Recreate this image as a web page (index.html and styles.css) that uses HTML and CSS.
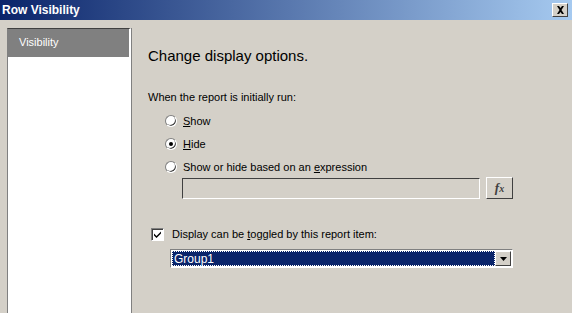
FILE: index.html
```html
<!DOCTYPE html>
<html lang="en">
<head>
    <meta charset="UTF-8">
    <title>Row Visibility</title>
    <link rel="stylesheet" href="styles.css">
</head>
<body>
    <div class="window">
        <div class="titlebar">
            <span class="title">Row Visibility</span>
            <span class="close-btn">
                <svg width="9" height="8" viewBox="0 0 9 8"><path d="M1 0h2l1.5 2L6 0h2L5.5 4 8 8H6L4.5 6 3 8H1l2.5-4z" fill="#000"/></svg>
            </span>
        </div>
        <div class="content">
            <div class="sidebar">
                <div class="side-item">Visibility</div>
            </div>
            <div class="main">
                <h1>Change display options.</h1>
                <p class="caption">When the report is initially run:</p>
                <div class="radio-row"><span class="radio"></span><span><u>S</u>how</span></div>
                <div class="radio-row"><span class="radio checked"></span><span><u>H</u>ide</span></div>
                <div class="radio-row"><span class="radio"></span><span>Show or hide based on an <u>e</u>xpression</span></div>
                <div class="expr-group">
                    <div class="expr-input"></div>
                    <div class="fx-btn"><i>f</i><sub>x</sub></div>
                </div>
                <div class="check-row">
                    <span class="checkbox">
                        <svg width="9" height="9" viewBox="0 0 9 9"><path d="M1 3.5l2.5 2.5L8 1.5v2L3.5 8 1 5.5z" fill="#000"/></svg>
                    </span>
                    <span>Display can be <u>t</u>oggled by this report item:</span>
                </div>
                <div class="select">
                    <div class="select-value"><span>Group1</span></div>
                    <div class="select-btn">
                        <svg width="7" height="4" viewBox="0 0 7 4"><path d="M0 0h7L3.5 4z" fill="#000"/></svg>
                    </div>
                </div>
            </div>
        </div>
    </div>
</body>
</html>
```
FILE: styles.css
```css
body {
    margin: 0;
    font-family: 'Liberation Sans', Arial, sans-serif;
    font-size: 11px;
    color: #000;
    background: #d4d0c8;
}

.window {
    width: 572px;
    height: 313px;
    display: flex;
    flex-direction: column;
    overflow: hidden;
}

.titlebar {
    height: 20px;
    flex: none;
    display: flex;
    align-items: center;
    justify-content: space-between;
    padding: 0 4px 0 2px;
    background: linear-gradient(to right, #0a246a, #a6caf0);
}

.title {
    color: #fff;
    font-weight: bold;
    font-size: 12px;
}

.close-btn {
    width: 16px;
    height: 14px;
    display: flex;
    align-items: center;
    justify-content: center;
    background: #d4d0c8;
    border: 1px solid;
    border-color: #fff #404040 #404040 #fff;
    box-sizing: border-box;
}

.content {
    flex: 1;
    display: flex;
    padding: 8px 0 0 7px;
}

.sidebar {
    width: 121px;
    background: #fff;
    border-top: 1px solid #404040;
    border-left: 1px solid #808080;
    border-right: 2px solid #fff;
    box-shadow: 1px 0 0 #808080;
}

.side-item {
    height: 28px;
    background: #808080;
    color: #fff;
    padding: 7px 0 0 11px;
    box-sizing: border-box;
}

.main {
    flex: 1;
    padding: 0 0 0 17px;
}

h1 {
    font-weight: normal;
    font-size: 15px;
    margin: 19px 0 0;
    line-height: 18px;
}

.caption {
    margin: 25px 0 5px;
    line-height: 14px;
}

.radio-row {
    display: flex;
    align-items: center;
    gap: 6px;
    height: 23px;
    padding-left: 17px;
}

.radio {
    width: 12px;
    height: 12px;
    border-radius: 50%;
    background: #fff;
    box-sizing: border-box;
    border: 1px solid;
    border-color: #808080 #fff #fff #808080;
    box-shadow: -1px -1px 0 #404040 inset;
    position: relative;
}

.radio.checked::after {
    content: "";
    position: absolute;
    left: 3px;
    top: 3px;
    width: 4px;
    height: 4px;
    border-radius: 50%;
    background: #000;
}

.expr-group {
    display: flex;
    gap: 6px;
    margin: 0 0 0 34px;
}

.expr-input {
    width: 298px;
    height: 21px;
    box-sizing: border-box;
    border: 1px solid;
    border-color: #404040 #fff #fff #404040;
    background: #d4d0c8;
}

.fx-btn {
    width: 27px;
    height: 22px;
    box-sizing: border-box;
    margin-top: -1px;
    border: 1px solid;
    border-color: #fff #404040 #404040 #fff;
    display: flex;
    align-items: center;
    justify-content: center;
    font-family: 'Liberation Serif', serif;
    font-weight: bold;
    font-size: 13px;
    color: #404040;
}

.fx-btn sub {
    font-size: 10px;
    font-style: italic;
    vertical-align: -2px;
}

.check-row {
    display: flex;
    align-items: center;
    gap: 8px;
    margin: 28px 0 0 3px;
    height: 14px;
}

.checkbox {
    width: 13px;
    height: 13px;
    box-sizing: border-box;
    background: #fff;
    border: 1px solid;
    border-color: #808080 #fff #fff #808080;
    box-shadow: 1px 1px 0 #404040 inset;
    display: flex;
    align-items: center;
    justify-content: center;
}

.select {
    display: flex;
    width: 343px;
    height: 19px;
    margin: 8px 0 0 22px;
    box-sizing: border-box;
    border: 1px solid;
    border-color: #808080 #fff #fff #808080;
    background: #fff;
    padding: 1px;
}

.select-value {
    flex: 1;
    background: #0a246a;
    color: #fff;
    outline: 1px dotted #fff;
    outline-offset: -1px;
    display: flex;
    align-items: center;
    padding-left: 2px;
    font-size: 12px;
}

.select-btn {
    width: 16px;
    box-sizing: border-box;
    background: #d4d0c8;
    border: 1px solid;
    border-color: #fff #404040 #404040 #fff;
    display: flex;
    align-items: center;
    justify-content: center;
}
```
